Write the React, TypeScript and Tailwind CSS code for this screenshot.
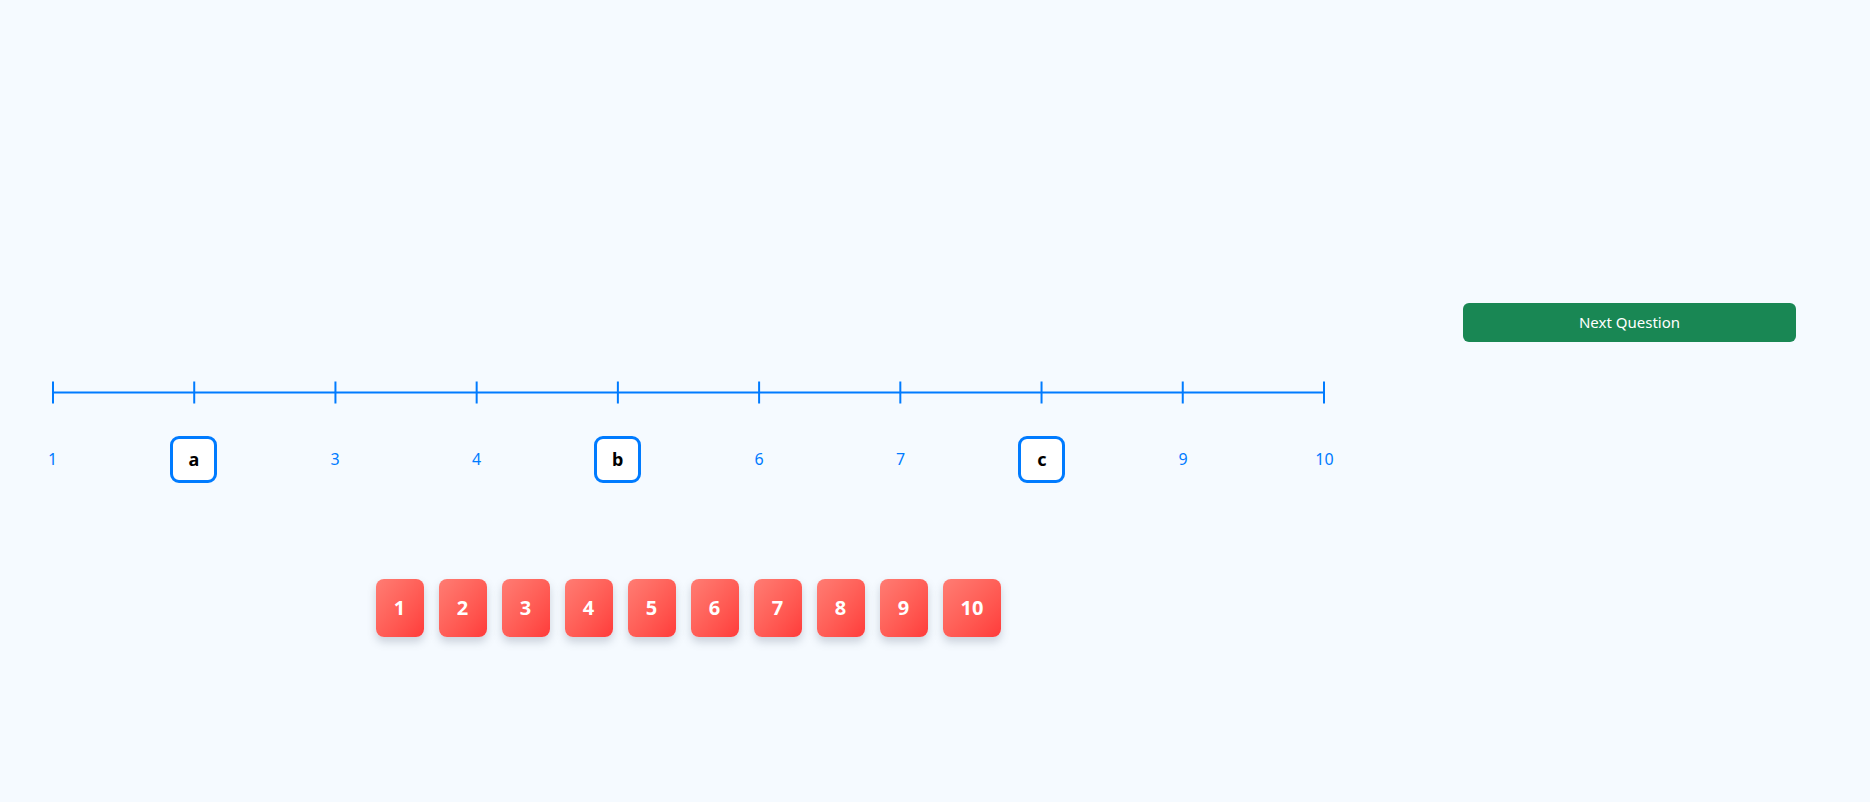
const ticks = Array.from({ length: 10 }, (_, i) => i + 1);
const blanks: Record<number, string> = { 2: "a", 5: "b", 8: "c" };

const TICK_GAP = 141.22;

function NumberLine() {
  return (
    <div className="flex flex-col">
      <svg width={1319} height={23} viewBox="0 0 1319 23" className="block">
        <line x1={24} y1={11.5} x2={24 + TICK_GAP * 9} y2={11.5} stroke="#007bff" strokeWidth={2} />
        {ticks.map((t, i) => (
          <line
            key={t}
            x1={24 + TICK_GAP * i}
            y1={0.5}
            x2={24 + TICK_GAP * i}
            y2={22.5}
            stroke="#007bff"
            strokeWidth={2}
          />
        ))}
      </svg>
      <div className="mt-[32px] flex justify-between">
        {ticks.map((t) =>
          blanks[t] ? (
            <div
              key={t}
              className="w-[47px] h-[47px] flex items-center justify-center border-[3px] border-[#007bff] rounded-[9px] bg-white text-[18px] font-bold text-black"
            >
              {blanks[t]}
            </div>
          ) : (
            <div key={t} className="w-[47px] h-[46px] flex items-center justify-center text-[16px] text-[#007bff]">
              {t}
            </div>
          )
        )}
      </div>
    </div>
  );
}

function Cards() {
  return (
    <div className="mt-[96px] flex justify-center gap-[15px]">
      {ticks.map((t) => (
        <div
          key={t}
          className={`${t > 9 ? "px-[18px]" : "w-[48px]"} h-[58px] flex items-center justify-center rounded-[8px] bg-linear-to-br from-[#ff7c73] to-[#ff3a3a] text-white text-[20px] font-bold shadow-[0_5px_9px_rgba(80,90,110,0.25)] cursor-pointer`}
        >
          {t}
        </div>
      ))}
    </div>
  );
}

export default function App() {
  return (
    <div className="min-h-screen bg-[#f5faff] flex items-start font-['Noto_Sans',sans-serif]">
      <div className="ml-[29px] w-[1319px] pt-[381px]">
        <NumberLine />
        <Cards />
      </div>
      <div className="ml-[115px] w-[333px] pt-[303px]">
        <button className="w-full h-[39px] rounded-[6px] bg-[#198754] text-white text-[15px]">
          Next Question
        </button>
      </div>
    </div>
  );
}
